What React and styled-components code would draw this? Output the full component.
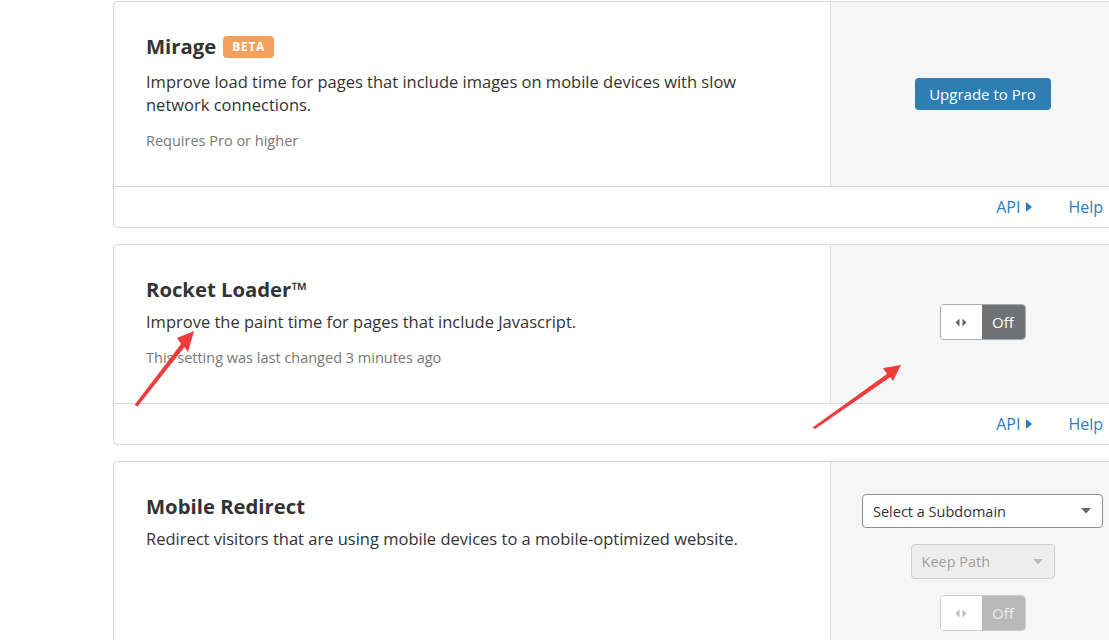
import React from 'react';
import styled, { createGlobalStyle } from 'styled-components';

const GlobalStyle = createGlobalStyle`
  html, body {
    margin: 0;
    padding: 0;
    background: #fff;
    overflow: hidden;
  }
  body {
    font-family: "Open Sans", "Noto Sans", sans-serif;
    color: #333;
  }
`;

const Page = styled.div`
  position: relative;
  width: 1109px;
  height: 640px;
  overflow: hidden;
`;

const List = styled.div`
  display: flex;
  flex-direction: column;
  gap: 16px;
  padding: 1px 0 0 113px;
`;

const Card = styled.section`
  width: 1024px;
  flex-shrink: 0;
  border: 1px solid #d9d9d9;
  border-radius: 4px;
  background: #fff;
`;

const CardBody = styled.div`
  display: flex;
`;

const Main = styled.div`
  width: 716px;
  flex: none;
  box-sizing: border-box;
  padding: 30px 32px 35px;
`;

const Side = styled.div`
  width: 306px;
  flex: none;
  background: #f6f6f6;
  border-left: 1px solid #d9d9d9;
  border-top-right-radius: 4px;
  display: flex;
  flex-direction: column;
  align-items: center;
  justify-content: center;
  gap: 16px;
  padding: 32px 0 ${p => (p.$lift ? 36 : 32)}px;
  box-sizing: border-box;
`;

const Title = styled.h2`
  display: flex;
  align-items: flex-start;
  gap: 6px;
  margin: 0;
  font-size: 20.3px;
  line-height: 28px;
  font-weight: 700;
  color: #333;
`;

const Badge = styled.span`
  margin: 4px 0 5px 1px;
  height: 22px;
  padding: 0 9px;
  border-radius: 4px;
  background: #f5a05c;
  color: #fff;
  font-size: 12px;
  font-weight: 700;
  letter-spacing: 0.7px;
  line-height: 22px;
`;

const Description = styled.p`
  margin: 7px 0 0;
  font-size: 16.5px;
  line-height: 23px;
  color: #333;
`;

const Note = styled.p`
  margin: 15px 0 0;
  font-size: 14.5px;
  line-height: 20px;
  color: #777;
`;

const Footer = styled.div`
  height: 40px;
  border-top: 1px solid #d9d9d9;
  display: flex;
  justify-content: flex-end;
  align-items: center;
  gap: 36px;
  padding-right: 23px;
`;

const FooterLink = styled.a`
  display: flex;
  align-items: center;
  gap: 6px;
  font-size: 16px;
  color: #2f7bbf;
  text-decoration: none;
  cursor: pointer;
`;

const PrimaryButton = styled.button`
  width: 136px;
  height: 32px;
  margin-left: -2px;
  border: none;
  border-radius: 4px;
  background: #2e7db3;
  color: #fff;
  font-family: inherit;
  font-size: 15px;
  cursor: pointer;
`;

const Toggle = styled.div`
  display: flex;
  width: 86px;
  height: 36px;
  margin-left: -2px;
  box-sizing: border-box;
  border: 1px solid ${p => (p.$disabled ? '#d0d0d0' : '#a9abad')};
  border-radius: 4px;
  overflow: hidden;
`;

const Knob = styled.span`
  width: 41px;
  background: #fff;
  display: flex;
  align-items: center;
  justify-content: center;
  color: ${p => (p.$disabled ? '#bbb' : '#666')};
`;

const ToggleState = styled.span`
  flex: 1;
  background: ${p => (p.$disabled ? '#b9b9b9' : '#6e7275')};
  color: ${p => (p.$disabled ? '#eee' : '#fff')};
  display: flex;
  align-items: center;
  justify-content: center;
  font-size: 15px;
`;

const Select = styled.div`
  display: flex;
  align-items: center;
  justify-content: space-between;
  box-sizing: border-box;
  width: ${p => p.$width}px;
  height: ${p => (p.$disabled ? 35 : 34)}px;
  margin-left: -2px;
  padding: 0 11px 0 10px;
  border: 1px solid ${p => (p.$disabled ? '#cfcfcf' : '#8f8f8f')};
  border-radius: 4px;
  background: ${p => (p.$disabled ? '#eeeeee' : '#fff')};
  font-size: 14.5px;
  color: ${p => (p.$disabled ? '#a0a0a0' : '#333')};
`;

const Overlay = styled.svg`
  position: absolute;
  left: 0;
  top: 0;
  pointer-events: none;
`;

const Caret = ({ color }) => (
  <svg width="10" height="6" viewBox="0 0 10 6">
    <path d="M0 0 L10 0 L5 5.5 Z" fill={color} />
  </svg>
);

const ArrowsGlyph = () => (
  <svg width="12" height="9" viewBox="0 0 12 9">
    <path d="M4.5 0.5 L0.5 4.5 L4.5 8.5 Z M7.5 0.5 L11.5 4.5 L7.5 8.5 Z" fill="currentColor" />
  </svg>
);

const RightTriangle = () => (
  <svg width="6" height="10" viewBox="0 0 6 10">
    <path d="M0 0 L6 5 L0 10 Z" fill="currentColor" />
  </svg>
);

const SwitchOff = ({ disabled }) => (
  <Toggle $disabled={disabled}>
    <Knob $disabled={disabled}>
      <ArrowsGlyph />
    </Knob>
    <ToggleState $disabled={disabled}>Off</ToggleState>
  </Toggle>
);

const CardFooter = () => (
  <Footer>
    <FooterLink>
      API <RightTriangle />
    </FooterLink>
    <FooterLink>
      Help <RightTriangle />
    </FooterLink>
  </Footer>
);

// red annotation arrows drawn on top of the screenshot
const Annotations = () => (
  <Overlay width="1109" height="640" viewBox="0 0 1109 640">
    <path
      d="M134.5 405 L181 344 L177 338 L194 331 L188 352 L184.5 347 L137.5 406.5 Z"
      fill="#f23a3a"
    />
    <path
      d="M812.5 427.5 L887 374 L883 368 L901 365 L893 381 L890.5 377 L815 429 Z"
      fill="#f23a3a"
    />
  </Overlay>
);

export default function App() {
  return (
    <Page>
      <GlobalStyle />
      <List>
        <Card>
          <CardBody>
            <Main>
              <Title>
                Mirage <Badge>BETA</Badge>
              </Title>
              <Description>
                Improve load time for pages that include images on mobile devices with slow network connections.
              </Description>
              <Note>Requires Pro or higher</Note>
            </Main>
            <Side>
              <PrimaryButton>Upgrade to Pro</PrimaryButton>
            </Side>
          </CardBody>
          <CardFooter />
        </Card>

        <Card>
          <CardBody>
            <Main>
              <Title>Rocket Loader™</Title>
              <Description>Improve the paint time for pages that include Javascript.</Description>
              <Note>This setting was last changed 3 minutes ago</Note>
            </Main>
            <Side $lift>
              <SwitchOff />
            </Side>
          </CardBody>
          <CardFooter />
        </Card>

        <Card>
          <CardBody>
            <Main>
              <Title>Mobile Redirect</Title>
              <Description>Redirect visitors that are using mobile devices to a mobile-optimized website.</Description>
            </Main>
            <Side>
              <Select $width={241}>
                Select a Subdomain <Caret color="#666" />
              </Select>
              <Select $width={144} $disabled>
                Keep Path <Caret color="#bbb" />
              </Select>
              <SwitchOff disabled />
            </Side>
          </CardBody>
          <CardFooter />
        </Card>
      </List>
      <Annotations />
    </Page>
  );
}
